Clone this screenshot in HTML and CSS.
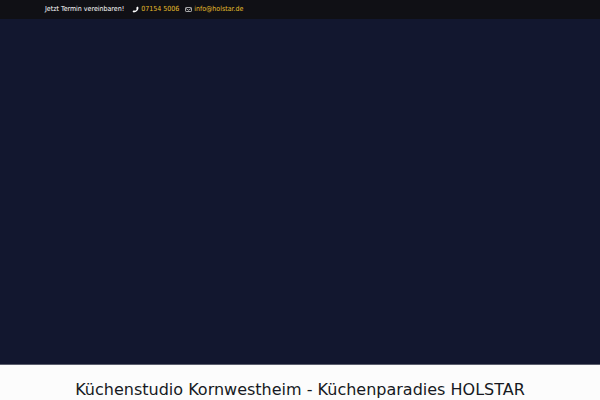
FILE: index.html
```html
<!DOCTYPE html>
<html lang="de">
  <head>
    <meta charset="UTF-8" />
    <meta name="viewport" content="width=device-width, initial-scale=1.0" />
    <title>Küchenparadies HOLSTAR</title>
    <link rel="stylesheet" href="styles.css">
  </head>
  <body>
    <header class="action-bar">
      <ul class="contact-details">
        <li class="slogan">Jetzt Termin vereinbaren!</li>
        <li class="phone">
          <svg class="icon" viewBox="0 0 14 14" aria-hidden="true">
            <path d="M10.6 1.2 13 3.2C13 8.6 8.6 13 3.2 13L1 10.5 4 8.3 5.8 9.6C7.5 8.9 8.9 7.5 9.5 5.8L8.3 4Z" fill="currentColor" />
          </svg>
          <a href="tel:071545006">07154 5006</a>
        </li>
        <li class="mail">
          <svg class="icon" viewBox="0 0 14 14" aria-hidden="true">
            <rect x="1" y="3" width="12" height="8" rx="1.5" fill="none" stroke="currentColor" stroke-width="1.3" />
            <path d="M1.5 4.5 7 8.5 12.5 4.5" fill="none" stroke="currentColor" stroke-width="1.2" />
          </svg>
          <a href="mailto:info@holstar.de">info@holstar.de</a>
        </li>
      </ul>
    </header>
    <div class="hero"></div>
    <main class="content">
      <h1 class="title">Küchenstudio Kornwestheim - Küchenparadies HOLSTAR</h1>
    </main>
  </body>
</html>
```

FILE: styles.css
```css
body {
  margin: 0;
  background-color: #fcfcfc;
  color: #161922;
  font-family: "DejaVu Sans", sans-serif;
}

.action-bar {
  padding: 0 45px;
  background-color: #101015;
  color: white;
}

.contact-details {
  display: flex;
  gap: 6px;
  margin: 0;
  padding: 0;
  list-style: none;
  font-family: "DejaVu Sans Condensed", "DejaVu Sans", sans-serif;
  font-size: 7px;
  line-height: 19px;
}

.slogan {
  padding-right: 2px;
}

.contact-details li {
  display: flex;
  align-items: center;
  gap: 2px;
}

.contact-details a {
  color: #e5be2c;
  text-decoration: none;
}

.icon {
  width: 7px;
  height: 7px;
}

.hero {
  height: calc(100vh - 54px);
  background-color: #12172f;
  border-bottom: 1px solid #5b5e6d;
  box-sizing: border-box;
}

.content {
  padding: 15px 20px;
}

.title {
  margin: 0;
  font-size: 16px;
  font-weight: normal;
  line-height: 19px;
  text-align: center;
}
```
